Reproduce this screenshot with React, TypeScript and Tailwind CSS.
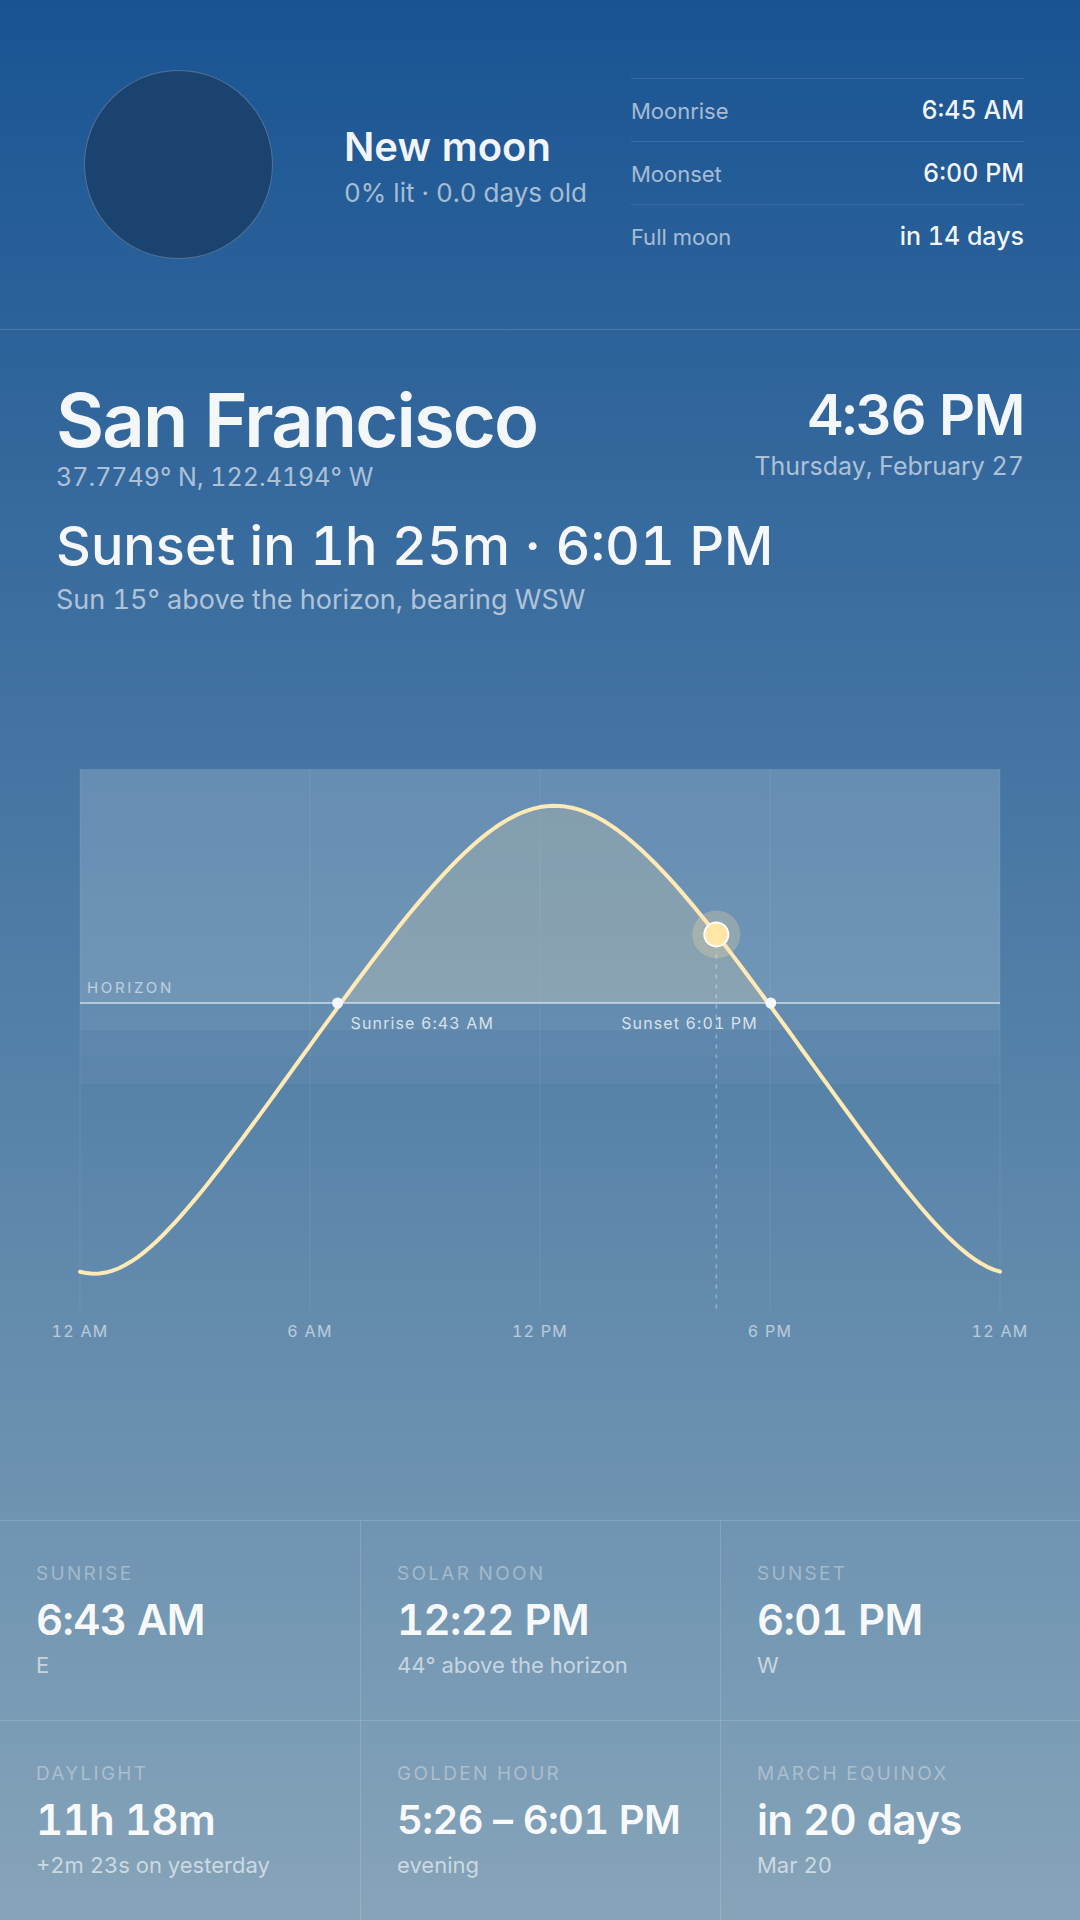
type Fact = {
  label: string;
  value: string;
  note: string;
  compact?: boolean;
};

const moonTimes = [
  { label: "Moonrise", value: "6:45 AM" },
  { label: "Moonset", value: "6:00 PM" },
  { label: "Full moon", value: "in 14 days" },
];

const facts: Fact[] = [
  { label: "Sunrise", value: "6:43 AM", note: "E" },
  { label: "Solar noon", value: "12:22 PM", note: "44° above the horizon" },
  { label: "Sunset", value: "6:01 PM", note: "W" },
  { label: "Daylight", value: "11h 18m", note: "+2m 23s on yesterday" },
  {
    label: "Golden hour",
    value: "5:26 – 6:01 PM",
    note: "evening",
    compact: true,
  },
  { label: "March equinox", value: "in 20 days", note: "Mar 20" },
];

const RAD = Math.PI / 180;
const LATITUDE = 37.7749;
const DECLINATION = -8.2;
const SOLAR_NOON = 12.38;
const SUNRISE = 6.72;
const SUNSET = 18.02;
const NOW = 16.6;

// chart geometry, in viewBox units
const LEFT = 40;
const RIGHT = 960;
const TOP = 12;
const BOTTOM = 553;
const HORIZON = 246;
const PER_DEGREE = 4.48;

const ticks = [
  { hour: 0, label: "12 AM" },
  { hour: 6, label: "6 AM" },
  { hour: 12, label: "12 PM" },
  { hour: 18, label: "6 PM" },
  { hour: 24, label: "12 AM" },
];

// civil, nautical and astronomical twilight
const twilight = [
  { from: 0, opacity: 0.1 },
  { from: 6, opacity: 0.06 },
  { from: 12, opacity: 0.04 },
];

function altitude(hour: number) {
  const angle = (hour - SOLAR_NOON) * 15 * RAD;
  const s =
    Math.sin(LATITUDE * RAD) * Math.sin(DECLINATION * RAD) +
    Math.cos(LATITUDE * RAD) * Math.cos(DECLINATION * RAD) * Math.cos(angle);
  return Math.asin(s) / RAD;
}

const toX = (hour: number) => LEFT + ((RIGHT - LEFT) * hour) / 24;
const toY = (degrees: number) => HORIZON - degrees * PER_DEGREE;

const curve = Array.from({ length: 145 }, (_, i) => {
  const hour = i / 6;
  return `${i ? "L" : "M"}${toX(hour).toFixed(1)} ${toY(altitude(hour)).toFixed(1)}`;
}).join("");

function SunChart() {
  const sunX = toX(NOW);
  const sunY = toY(altitude(NOW));
  return (
    <svg
      viewBox="0 0 1000 622"
      role="img"
      aria-label="Sun altitude through the day"
      className="block w-full"
    >
      <defs>
        <clipPath id="above-horizon">
          <rect x={LEFT} y={TOP} width={RIGHT - LEFT} height={HORIZON - TOP} />
        </clipPath>
      </defs>
      <rect
        x={LEFT}
        y={TOP}
        width={RIGHT - LEFT}
        height={HORIZON - TOP}
        fill="#fff"
        opacity={0.18}
      />
      {twilight.map((band) => (
        <rect
          key={band.from}
          x={LEFT}
          y={HORIZON + band.from * 4.5}
          width={RIGHT - LEFT}
          height={27}
          fill="#fff"
          opacity={band.opacity}
        />
      ))}
      {ticks.map((tick) => (
        <line
          key={tick.hour}
          x1={toX(tick.hour)}
          x2={toX(tick.hour)}
          y1={TOP}
          y2={BOTTOM}
          stroke="#fff"
          strokeWidth={2}
          opacity={0.035}
        />
      ))}
      <path
        d={`${curve}Z`}
        fill="#ffe3a0"
        opacity={0.18}
        clipPath="url(#above-horizon)"
      />
      <line
        x1={LEFT}
        x2={RIGHT}
        y1={HORIZON}
        y2={HORIZON}
        stroke="#fff"
        strokeWidth={2}
        opacity={0.5}
      />
      <line
        x1={sunX}
        x2={sunX}
        y1={sunY}
        y2={BOTTOM}
        stroke="#fff"
        strokeWidth={1.5}
        strokeDasharray="4 6"
        opacity={0.35}
      />
      <path
        d={curve}
        fill="none"
        stroke="#ffe9b5"
        strokeWidth={4}
        strokeLinecap="round"
        strokeLinejoin="round"
      />
      <circle cx={toX(SUNRISE)} cy={HORIZON} r={5.5} fill="#f4f7fb" />
      <circle cx={toX(SUNSET)} cy={HORIZON} r={5.5} fill="#f4f7fb" />
      <circle cx={sunX} cy={sunY} r={24} fill="#ffe3a0" opacity={0.25} />
      <circle
        cx={sunX}
        cy={sunY}
        r={12}
        fill="#ffe5a6"
        stroke="#fff"
        strokeWidth={2}
      />
      <text
        x={47}
        y={236}
        className="fill-white/55 text-[15px] tracking-[0.18em]"
      >
        HORIZON
      </text>
      <g className="fill-white/75 text-[16px] tracking-[0.07em]">
        <text x={toX(SUNRISE) + 13} y={272}>
          Sunrise 6:43 AM
        </text>
        <text x={toX(SUNSET) - 13} y={272} textAnchor="end">
          Sunset 6:01 PM
        </text>
      </g>
      <g className="fill-white/55 text-[16px] tracking-[0.08em]">
        {ticks.map((tick) => (
          <text key={tick.hour} x={toX(tick.hour)} y={580} textAnchor="middle">
            {tick.label}
          </text>
        ))}
      </g>
    </svg>
  );
}

function MoonHeader() {
  return (
    <header className="flex items-center gap-11 border-b border-white/15 px-14 py-[70px]">
      <div className="flex w-[244px] shrink-0 justify-center">
        <div className="size-[189px] rounded-full border border-white/25 bg-[#1a436f]" />
      </div>
      <div className="shrink-0">
        <h2 className="text-[40px] leading-12 font-semibold">New moon</h2>
        <p className="mt-2 text-[26px] leading-7 text-white/60">
          0% lit · 0.0 days old
        </p>
      </div>
      <dl className="min-w-0 flex-1">
        {moonTimes.map((row) => (
          <div
            key={row.label}
            className="flex items-baseline justify-between border-t border-white/10 pt-[17px] pb-[15px] leading-[29px] last:pb-0"
          >
            <dt className="text-[22px] text-white/60">{row.label}</dt>
            <dd className="text-[25px] font-medium">{row.value}</dd>
          </div>
        ))}
      </dl>
    </header>
  );
}

function FactCell({ label, value, note, compact }: Fact) {
  return (
    <div className="flex flex-col border-t border-l border-white/15 px-9 pt-10 nth-[3n+1]:border-l-0">
      <dt className="text-[19px] leading-[26px] tracking-[0.12em] text-white/35 uppercase">
        {label}
      </dt>
      <dd
        className={`mt-2 leading-[50px] font-semibold tracking-[-0.015em] whitespace-nowrap ${compact ? "text-[40px]" : "text-[42px]"}`}
      >
        {value}
      </dd>
      <dd className="mt-1.5 text-[22px] leading-7 text-white/60">{note}</dd>
    </div>
  );
}

export default function App() {
  return (
    <div className="flex min-h-screen flex-col bg-linear-to-b from-[#185493] via-[#4f7da6] to-[#86a4b9] font-[Inter,sans-serif] text-white/95 tabular-nums">
      <MoonHeader />
      <main className="flex flex-1 flex-col">
        <section className="px-14 pt-12">
          <div className="flex items-start justify-between">
            <div>
              <h1 className="text-[74px] leading-[84px] font-semibold tracking-tight">
                San Francisco
              </h1>
              <p className="text-[25px] leading-[30px] text-white/60">
                37.7749° N, 122.4194° W
              </p>
            </div>
            <div className="text-right">
              <p className="text-[56px] leading-[74px] font-semibold tracking-tight">
                4:36 PM
              </p>
              <p className="text-[25px] leading-7 text-white/60">
                Thursday, February 27
              </p>
            </div>
          </div>
          <p className="mt-5 text-[54px] leading-[68px] font-medium">
            Sunset in 1h 25m · 6:01 PM
          </p>
          <p className="mt-1 text-[27px] leading-8 text-white/60">
            Sun 15° above the horizon, bearing WSW
          </p>
        </section>
        <section className="flex flex-1 items-center px-10">
          <SunChart />
        </section>
      </main>
      <dl className="grid auto-rows-[200px] grid-cols-3">
        {facts.map((fact) => (
          <FactCell key={fact.label} {...fact} />
        ))}
      </dl>
    </div>
  );
}
